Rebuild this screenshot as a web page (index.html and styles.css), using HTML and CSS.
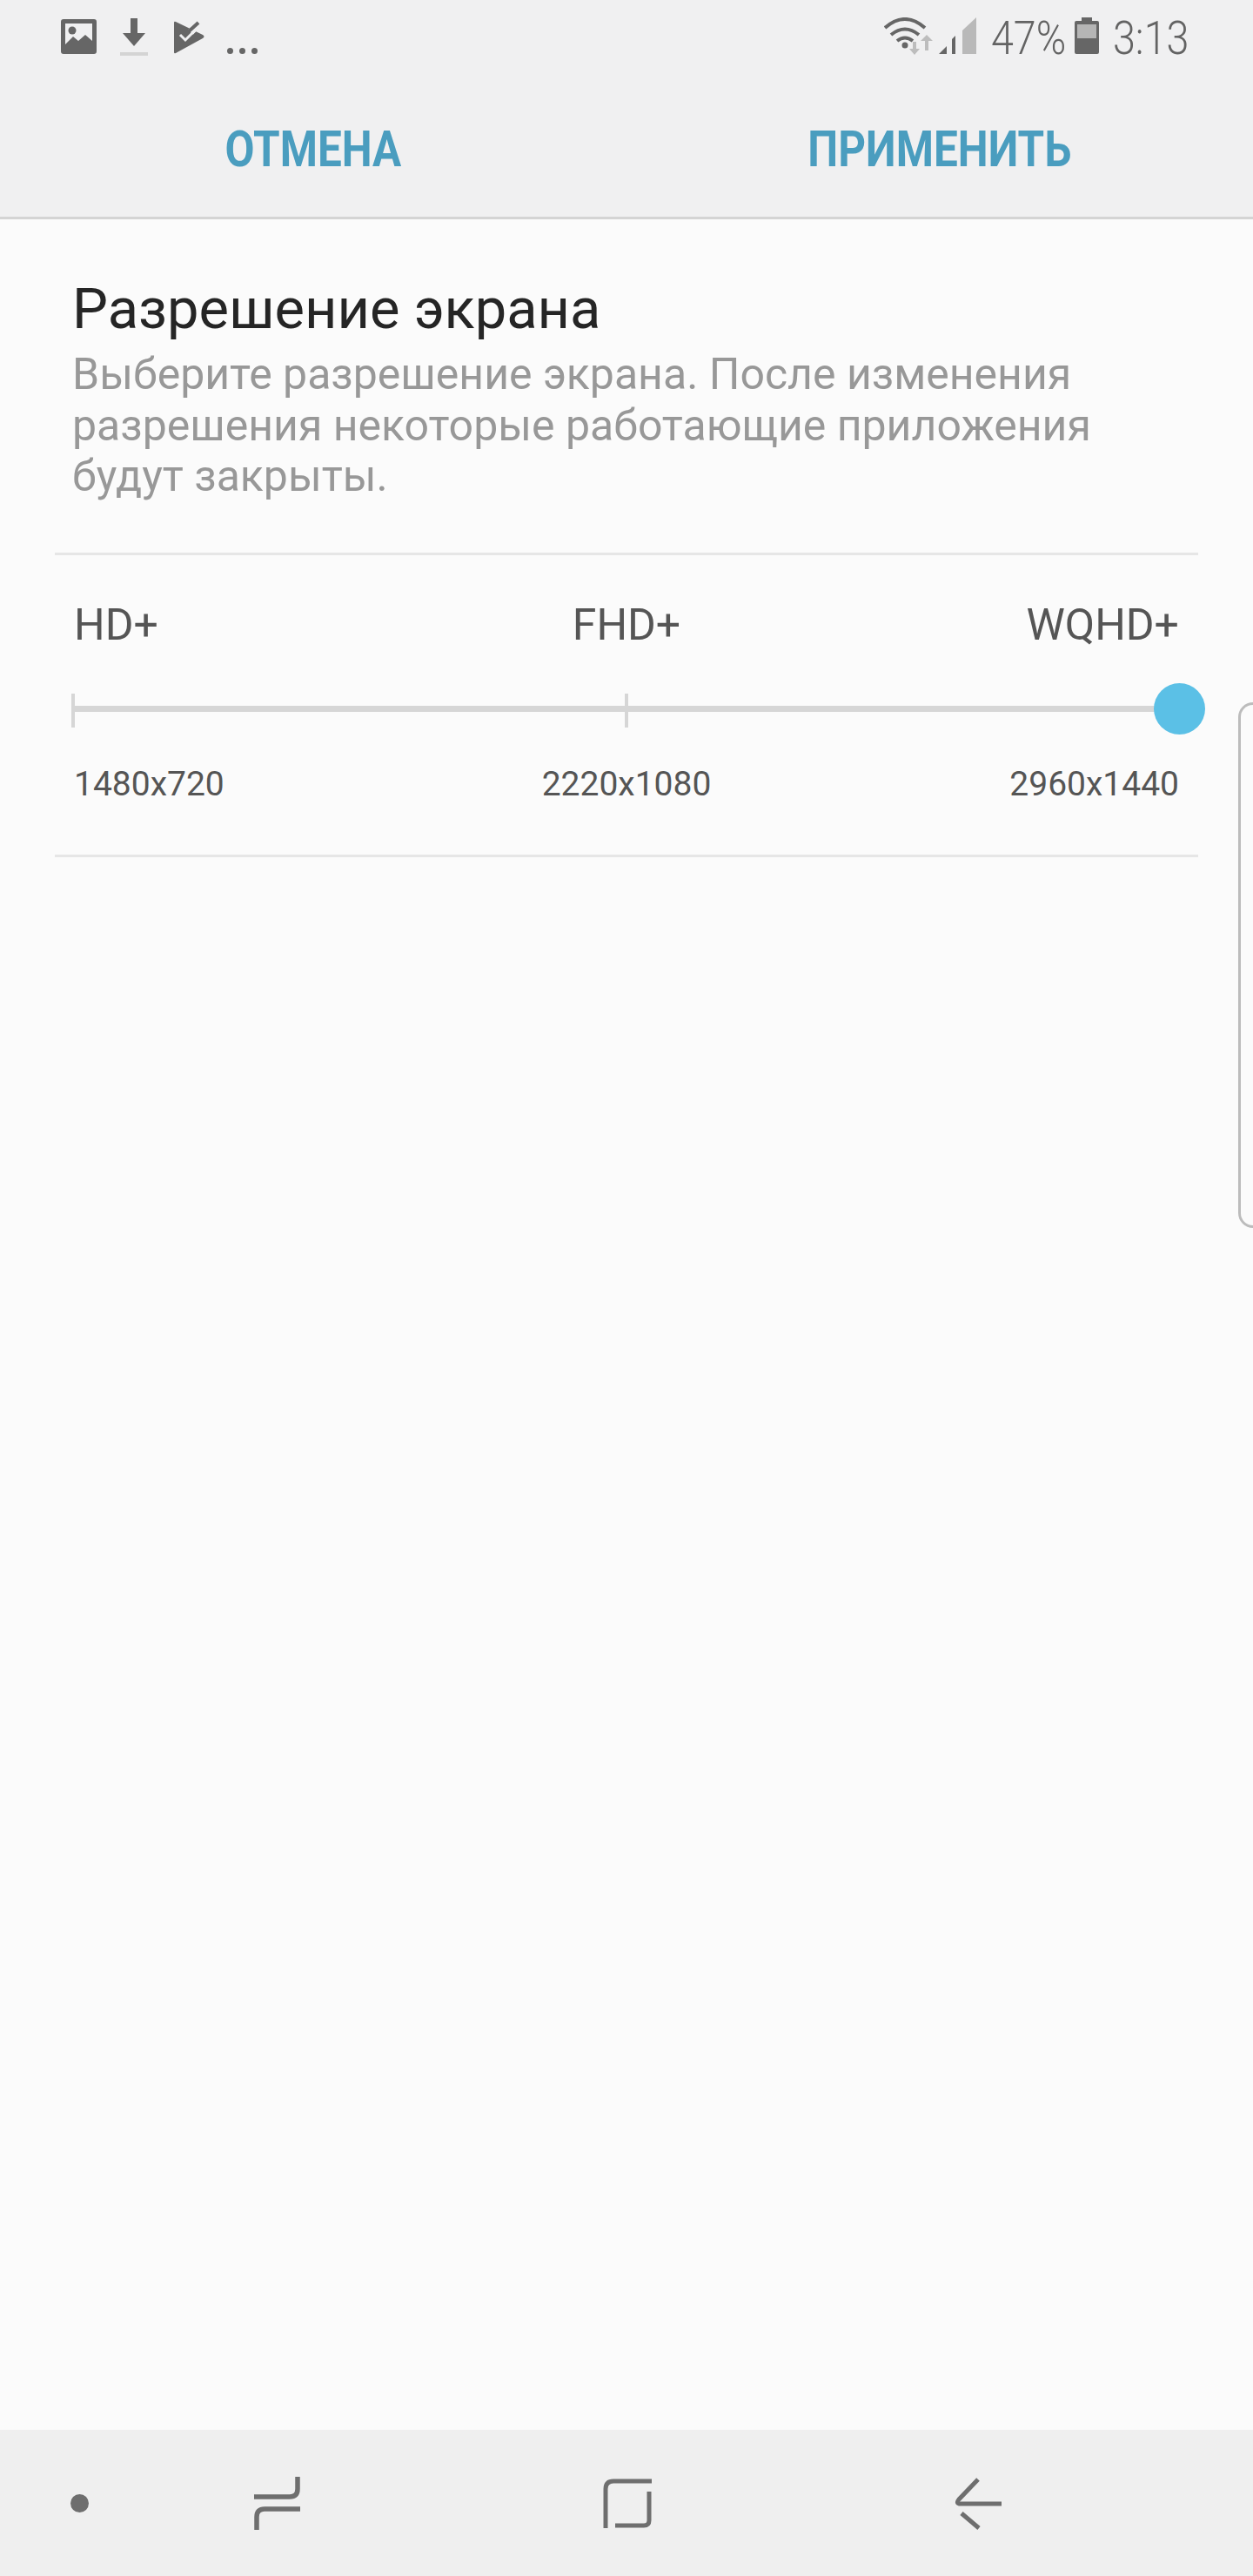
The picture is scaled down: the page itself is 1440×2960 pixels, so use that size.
FILE: index.html
```html
<!DOCTYPE html>
<html lang="ru">
<head>
    <meta charset="UTF-8">
    <meta name="viewport" content="width=device-width, initial-scale=1.0">
    <title>Разрешение экрана</title>
    <link rel="stylesheet" href="styles.css">
</head>
<body>

    <div class="header">
        <div class="statusbar">
            <div class="notif-icons">
                <svg class="ic-image" width="41" height="40" viewBox="0 0 41 40">
                    <path fill="#666" fill-rule="evenodd" d="M3 0h35a3 3 0 0 1 3 3v34a3 3 0 0 1-3 3H3a3 3 0 0 1-3-3V3a3 3 0 0 1 3-3zM5 5v24l9-9 6 5 8-7 8 7V5z"/>
                    <circle cx="13" cy="13" r="4.5" fill="#666"/>
                </svg>
                <svg class="ic-download" width="32" height="44" viewBox="0 0 32 44">
                    <path fill="#666" d="M12 0h8v17h9L16 32 3 17h9z"/>
                    <rect y="39" width="32" height="4" fill="#d4d4d4"/>
                </svg>
                <svg class="ic-store" width="36" height="38" viewBox="0 0 36 38">
                    <path fill="#666" d="M0 2q0-2 2-1l31 15q3 2 0 4L2 37q-2 1-2-1z"/>
                    <path fill="none" stroke="#f0f0f1" stroke-width="3" d="M7 16l6 6 12-12"/>
                    <path fill="none" stroke="#f0f0f1" stroke-width="8" d="M19 13L31 1"/>
                    <path fill="none" stroke="#666" stroke-width="4" d="M17 12L28 2"/>
                </svg>
                <div class="more-dots"><span></span><span></span><span></span></div>
            </div>
            <div class="sys-icons">
                <svg class="ic-wifi" width="56" height="44" viewBox="0 0 56 44">
                    <path fill="none" stroke="#666" stroke-width="4" d="M1 12q23-20 46 0M8 20q16-13 32 0M15 27q9-7 18 0"/>
                    <circle cx="24" cy="32" r="3.5" fill="#666"/>
                    <path fill="#bdbdbd" d="M33 28h4v8h4l-6 7-6-7h4zM47 38h4v-11h5l-7-7-7 7h5z"/>
                </svg>
                <svg class="ic-signal" width="43" height="42" viewBox="0 0 43 42">
                    <path fill="#666" d="M0 42l9-9v9zM15 42V25l4-4v21z"/>
                    <path fill="#b9b9b9" d="M27 42V15L43 0v42z"/>
                </svg>
                <span class="status-text battery-pct"><span>47%</span></span>
                <svg class="ic-battery" width="28" height="42" viewBox="0 0 28 42">
                    <path fill="#666" d="M8 0h12v4h6a2 2 0 0 1 2 2v34a2 2 0 0 1-2 2H2a2 2 0 0 1-2-2V6a2 2 0 0 1 2-2h6z"/>
                    <rect x="3" y="8" width="22" height="16" fill="#b5b5b5"/>
                </svg>
                <span class="status-text clock"><span>3:13</span></span>
            </div>
        </div>
        <div class="actions">
            <a href="#" class="action"><span>ОТМЕНА</span></a>
            <a href="#" class="action"><span>ПРИМЕНИТЬ</span></a>
        </div>
    </div>

    <div class="content">
        <div class="intro">
            <h1>Разрешение экрана</h1>
            <p>Выберите разрешение экрана. После изменения разрешения некоторые работающие приложения будут закрыты.</p>
        </div>

        <div class="resolution">
            <div class="row names">
                <span>HD+</span>
                <span>FHD+</span>
                <span>WQHD+</span>
            </div>
            <div class="slider">
                <div class="tick tick-start"></div>
                <div class="tick tick-mid"></div>
                <div class="thumb"></div>
            </div>
            <div class="row sizes">
                <span>1480x720</span>
                <span>2220x1080</span>
                <span>2960x1440</span>
            </div>
        </div>

        <div class="edge-handle"></div>
    </div>

    <div class="navbar">
        <div class="nav-dot"></div>
        <svg class="nav-recent" width="53" height="61" viewBox="0 0 53 61">
            <path fill="none" stroke="#6e6e6e" stroke-width="5.5" d="M50 0v14q0 9-9 9H0M53 37H12q-9 0-9 9v15"/>
        </svg>
        <svg class="nav-home" width="56" height="57" viewBox="0 0 56 57">
            <path fill="none" stroke="#6e6e6e" stroke-width="5" d="M56 3H12q-9 0-9 9v45M53 15v33q0 6-6 6H14"/>
        </svg>
        <svg class="nav-back" width="54" height="60" viewBox="0 0 54 60">
            <path fill="none" stroke="#6e6e6e" stroke-width="5" d="M27 2L5 25q-4 5 2 5h47M8 41l20 17"/>
        </svg>
    </div>

</body>
</html>
```

FILE: styles.css
```css
html, body {
    margin: 0;
    padding: 0;
}

body {
    width: 1440px;
    height: 2960px;
    display: flex;
    flex-direction: column;
    overflow: hidden;
    font-family: Roboto, "Noto Sans", sans-serif;
    background-color: #fbfbfb;
}

.header {
    height: 249px;
    flex: none;
    background-color: #f0f0f1;
    border-bottom: 3px solid #d4d4d4;
}

.statusbar {
    height: 84px;
    display: flex;
    justify-content: space-between;
    padding: 20px 75px 0 70px;
    box-sizing: border-box;
}

.notif-icons,
.sys-icons {
    display: flex;
    align-items: flex-start;
}

.ic-image {
    margin-top: 2px;
}

.ic-download {
    margin-top: 1px;
    margin-left: 27px;
}

.ic-store {
    margin-top: 4px;
    margin-left: 30px;
}

.more-dots {
    display: flex;
    gap: 7px;
    margin-top: 35px;
    margin-left: 25px;
}

.more-dots span {
    width: 7px;
    height: 7px;
    border-radius: 50%;
    background: #666;
}

.ic-signal {
    margin-left: 7px;
}

.ic-battery {
    margin-left: 13px;
}

.status-text {
    display: block;
    color: #636363;
    font-size: 53px;
    font-weight: 300;
    line-height: 42px;
    height: 42px;
    margin-top: 3px;
}

.status-text span {
    display: inline-block;
    transform: scaleX(0.88);
    transform-origin: left center;
}

.battery-pct {
    width: 83px;
    margin-left: 17px;
}

.clock {
    width: 86px;
    margin-left: 16px;
}

.actions {
    height: 165px;
    display: grid;
    grid-template-columns: 1fr 1fr;
}

.action {
    text-align: center;
    color: #4a9dbf;
    text-decoration: none;
    font-size: 58px;
    font-weight: 700;
    line-height: 66px;
    padding-top: 54px;
}

.action span {
    display: inline-block;
    transform: scaleX(0.852);
}

.content {
    flex: 1;
    position: relative;
}

.intro {
    padding: 0 85px 0 83px;
    height: 383px;
}

h1 {
    margin: 0;
    padding-top: 65px;
    color: #252525;
    font-size: 65px;
    font-weight: 400;
    line-height: 76px;
}

.intro p {
    margin: 0;
    padding-top: 8px;
    color: #989898;
    font-size: 50px;
    line-height: 58.5px;
}

.resolution {
    margin: 0 63px;
    padding: 0 22px;
    height: 350px;
    box-sizing: border-box;
    border-top: 3px solid #e6e6e6;
    border-bottom: 3px solid #e6e6e6;
}

.row {
    display: grid;
    grid-template-columns: 1fr auto 1fr;
    color: #555;
}

.row span:last-child {
    text-align: right;
}

.names {
    font-size: 50px;
    line-height: 56px;
    padding-top: 52px;
}

.sizes {
    font-size: 39px;
    line-height: 46px;
    padding-top: 60px;
}

.slider {
    position: relative;
    height: 7px;
    margin-top: 65px;
    margin-left: -1px;
    background: #d6d6d6;
}

.tick {
    position: absolute;
    top: -14px;
    width: 4px;
    height: 39px;
    background: #d6d6d6;
}

.tick-start {
    left: -2px;
}

.tick-mid {
    left: 634px;
}

.thumb {
    position: absolute;
    right: -30px;
    top: -26px;
    width: 59px;
    height: 59px;
    border-radius: 50%;
    background: #5bc0e6;
}

.edge-handle {
    position: absolute;
    top: 555px;
    right: 0;
    width: 14px;
    height: 598px;
    border: 3px solid #bcbcbc;
    border-right: 0;
    border-radius: 20px 0 0 20px;
}

.navbar {
    height: 168px;
    flex: none;
    display: flex;
    align-items: flex-start;
    padding-left: 81px;
    background-color: #efefef;
}

.nav-dot {
    width: 21px;
    height: 21px;
    margin-top: 74px;
    border-radius: 50%;
    background: #6e6e6e;
}

.nav-recent {
    margin-top: 54px;
    margin-left: 190px;
}

.nav-home {
    margin-top: 56px;
    margin-left: 348px;
}

.nav-back {
    margin-top: 55px;
    margin-left: 348px;
}
```
